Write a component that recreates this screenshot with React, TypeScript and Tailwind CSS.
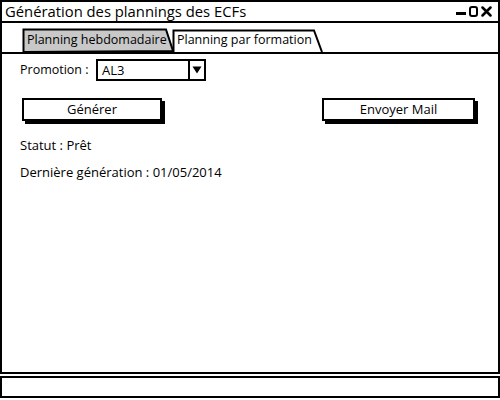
import React from 'react';

const font = { fontFamily: '"Open Sans", "DejaVu Sans", sans-serif' };

function Tab({ label, active, width }: { label: string; active?: boolean; width: number }) {
  const h = active ? 23 : 24;
  return (
    <div className={`relative flex items-center ${active ? 'h-[23px] -ml-[2px] z-10' : 'h-[24px]'}`} style={{ width }}>
      <svg className="absolute inset-0" width={width} height={h} viewBox={`0 0 ${width} ${h}`}>
        {active ? (
          <path
            d={`M1.5 ${h} L1.5 1.5 L${width - 9} 1.5 L${width - 1} ${h}`}
            fill="#fff"
            stroke="#000"
            strokeWidth="2"
          />
        ) : (
          <path
            d={`M1.5 ${h} L1.5 1.5 L${width - 8} 1.5 L${width - 1} ${h - 1} Z`}
            fill="#c8c8c8"
            stroke="#000"
            strokeWidth="2"
          />
        )}
      </svg>
      <span className="relative pl-[5px] text-[12.5px] leading-none text-black whitespace-nowrap">{label}</span>
    </div>
  );
}

function Button({ label, width }: { label: string; width: number }) {
  return (
    <div
      className="h-[23px] border-2 border-black bg-white shadow-[3px_3px_0_#000] flex items-center justify-center text-[13px] text-black"
      style={{ width }}
    >
      {label}
    </div>
  );
}

export default function App() {
  return (
    <div className="w-[500px] h-[400px] bg-white flex flex-col" style={font}>
      {/* window */}
      <div className="h-[374px] border-2 border-black flex flex-col">
        <div className="h-[21px] border-b-2 border-black flex items-center justify-between pl-[3px] pr-[6px]">
          <span className="text-[14.8px] text-black leading-none">Génération des plannings des ECFs</span>
          <div className="flex items-end gap-[3px]">
            <span className="w-[10px] h-[3px] bg-black mb-[2px]" />
            <span className="w-[9px] h-[11px] border-2 border-black rounded-[3px]" />
            <svg width="11" height="11" viewBox="0 0 11 11">
              <path d="M1.5 1.5 L9.5 9.5 M9.5 1.5 L1.5 9.5" stroke="#000" strokeWidth="2.5" strokeLinecap="round" />
            </svg>
          </div>
        </div>
        <div className="flex items-end pl-[20px] pt-[5px] border-b-2 border-black">
          <Tab label="Planning hebdomadaire" width={152} />
          <Tab label="Planning par formation" width={151} active />
        </div>
        <div className="flex-1 flex flex-col px-[18px] pt-[5px]">
          <div className="flex items-center">
            <span className="w-[76px] text-[12.5px] text-black">Promotion :</span>
            <div className="w-[110px] h-[22px] border-2 border-black flex">
              <span className="flex-1 pl-[4px] text-[13px] leading-[18px] text-black">AL3</span>
              <div className="w-[16px] border-l-2 border-black flex items-center justify-center">
                <svg width="10" height="8" viewBox="0 0 10 8">
                  <path d="M0.5 0.5 L9.5 0.5 L5 7.5 Z" fill="#000" />
                </svg>
              </div>
            </div>
          </div>
          <div className="flex justify-between mt-[17px] pl-[2px] pr-[5px]">
            <Button label="Générer" width={140} />
            <Button label="Envoyer Mail" width={153} />
          </div>
          <div className="mt-[15px] text-[13px] text-black">Statut : Prêt</div>
          <div className="mt-[7px] text-[13px] text-black">Dernière génération : 01/05/2014</div>
        </div>
      </div>
      <div className="mt-[2px] h-[22px] border-2 border-black" />
    </div>
  );
}
